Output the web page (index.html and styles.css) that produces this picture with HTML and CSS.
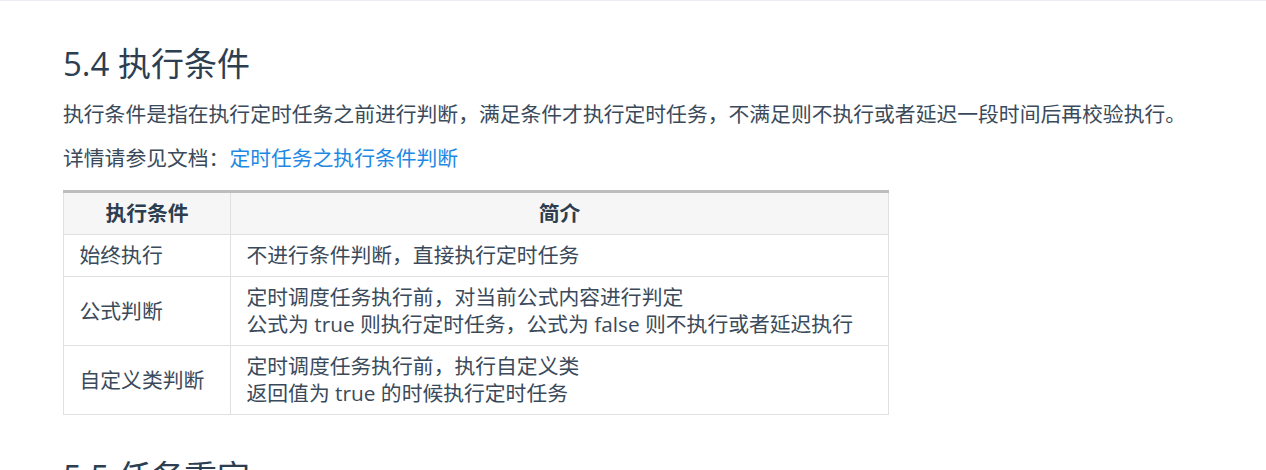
FILE: index.html
```html
<!DOCTYPE html>
<html lang="zh-CN">
<head>
<meta charset="utf-8">
<title>5.4 执行条件</title>
<link rel="stylesheet" href="styles.css">
</head>
<body>
<div class="topline"></div>
<main class="content">
  <h2 class="heading">5.4 执行条件</h2>
  <p class="para">执行条件是指在执行定时任务之前进行判断，满足条件才执行定时任务，不满足则不执行或者延迟一段时间后再校验执行。</p>
  <p class="para">详情请参见文档：<a class="link" href="#">定时任务之执行条件判断</a></p>
  <table class="table">
    <thead>
      <tr><th class="col1">执行条件</th><th>简介</th></tr>
    </thead>
    <tbody>
      <tr><td>始终执行</td><td>不进行条件判断，直接执行定时任务</td></tr>
      <tr><td>公式判断</td><td>定时调度任务执行前，对当前公式内容进行判定<br>公式为 true 则执行定时任务，公式为 false 则不执行或者延迟执行</td></tr>
      <tr><td>自定义类判断</td><td>定时调度任务执行前，执行自定义类<br>返回值为 true 的时候执行定时任务</td></tr>
    </tbody>
  </table>
  <h2 class="heading next">5.5 任务重定</h2>
</main>
</body>
</html>
```

FILE: styles.css
```css
html, body {
  margin: 0;
  padding: 0;
  background: #ffffff;
  overflow: hidden;
}
body {
  font-family: "Open Sans", "Noto Sans CJK SC", sans-serif;
  color: #2c3e50;
  font-size: 20.8px;
}
.topline {
  height: 1px;
  background: #eaeef4;
}
.content {
  padding: 41px 0 0 63px;
}
.heading {
  margin: 0;
  font-size: 33px;
  font-weight: 400;
  line-height: 44px;
  color: #2c3e50;
  white-space: nowrap;
}
.para {
  margin: 13px 0 0 0;
  line-height: 30px;
  color: #3a4a5b;
  white-space: nowrap;
}
.para + .para {
  margin-top: 14px;
}
.link {
  color: #1e88e5;
  text-decoration: none;
}
.table {
  margin-top: 17px;
  border-collapse: collapse;
  width: 826px;
  border-top: 3px solid #bdbdbd;
}
.table th,
.table td {
  border: 1px solid #e0e0e0;
  padding: 7px 15.5px;
  line-height: 27px;
  font-size: 20.8px;
  text-align: left;
  color: #3a4a5b;
  vertical-align: middle;
}
.table th {
  background: #f6f6f6;
  font-weight: 700;
  text-align: center;
  color: #2c3e50;
  border-top: none;
}
.table .col1 {
  width: 135px;
}
.heading.next {
  margin-top: 40px;
}
```
